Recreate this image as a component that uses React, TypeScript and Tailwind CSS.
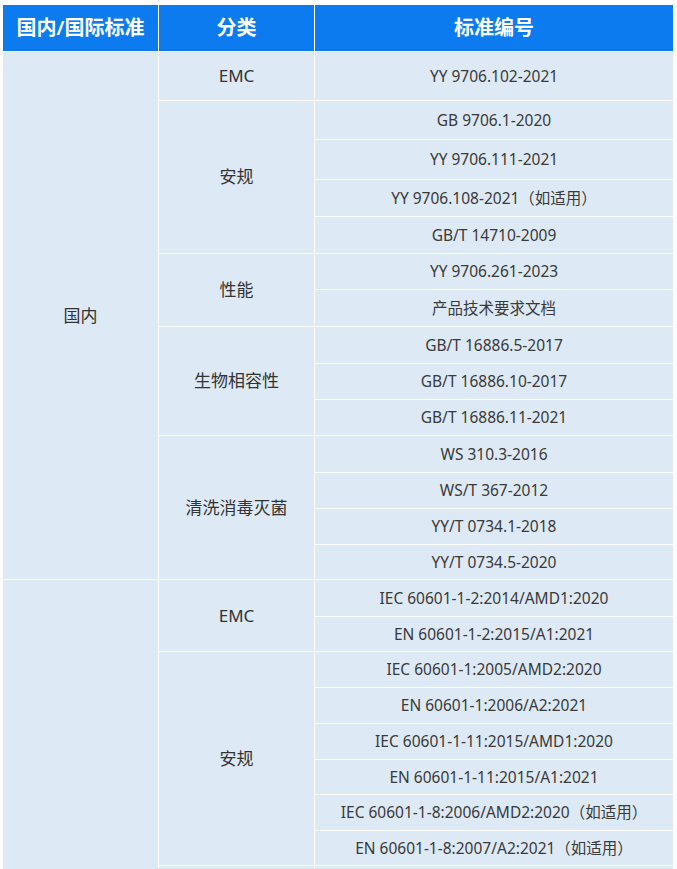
type Sub = { name: string; items: { text: string; h: string }[] };
type Group = { name: string; subs: Sub[] };

// row heights are the track height; the 1px white gap draws the grid line
const groups: Group[] = [
  {
    name: "国内",
    subs: [
      { name: "EMC", items: [{ text: "YY 9706.102-2021", h: "h-[48px]" }] },
      {
        name: "安规",
        items: [
          { text: "GB 9706.1-2020", h: "h-[38px]" },
          { text: "YY 9706.111-2021", h: "h-[39px]" },
          { text: "YY 9706.108-2021（如适用）", h: "h-[36px]" },
          { text: "GB/T 14710-2009", h: "h-[36px]" },
        ],
      },
      {
        name: "性能",
        items: [
          { text: "YY 9706.261-2023", h: "h-[35px]" },
          { text: "产品技术要求文档", h: "h-[36px]" },
        ],
      },
      {
        name: "生物相容性",
        items: [
          { text: "GB/T 16886.5-2017", h: "h-[36px]" },
          { text: "GB/T 16886.10-2017", h: "h-[35px]" },
          { text: "GB/T 16886.11-2021", h: "h-[35px]" },
        ],
      },
      {
        name: "清洗消毒灭菌",
        items: [
          { text: "WS 310.3-2016", h: "h-[36px]" },
          { text: "WS/T 367-2012", h: "h-[35px]" },
          { text: "YY/T 0734.1-2018", h: "h-[35px]" },
          { text: "YY/T 0734.5-2020", h: "h-[34px]" },
        ],
      },
    ],
  },
  {
    name: "国际",
    subs: [
      {
        name: "EMC",
        items: [
          { text: "IEC 60601-1-2:2014/AMD1:2020", h: "h-[36px]" },
          { text: "EN 60601-1-2:2015/A1:2021", h: "h-[34px]" },
        ],
      },
      {
        name: "安规",
        items: [
          { text: "IEC 60601-1:2005/AMD2:2020", h: "h-[35px]" },
          { text: "EN 60601-1:2006/A2:2021", h: "h-[35px]" },
          { text: "IEC 60601-1-11:2015/AMD1:2020", h: "h-[35px]" },
          { text: "EN 60601-1-11:2015/A1:2021", h: "h-[34px]" },
          { text: "IEC 60601-1-8:2006/AMD2:2020（如适用）", h: "h-[35px]" },
          { text: "EN 60601-1-8:2007/A2:2021（如适用）", h: "h-[34px]" },
        ],
      },
      {
        name: "性能",
        items: [
          { text: "ISO 80601-2-61:2017", h: "h-[35px]" },
          { text: "IEC 60601-2-49:2011", h: "h-[35px]" },
        ],
      },
      {
        name: "生物相容性",
        items: [
          { text: "ISO 10993-1:2018", h: "h-[35px]" },
          { text: "ISO 10993-5:2009", h: "h-[35px]" },
          { text: "ISO 10993-10:2021", h: "h-[35px]" },
          { text: "ISO 10993-23:2021", h: "h-[35px]" },
        ],
      },
      {
        name: "清洗消毒灭菌",
        items: [
          { text: "ISO 17664-1:2021", h: "h-[35px]" },
          { text: "ISO 15883-1:2006/AMD1:2014", h: "h-[35px]" },
        ],
      },
      { name: "可用性", items: [{ text: "IEC 62366-1:2015/AMD1:2020", h: "h-[35px]" }] },
      { name: "软件", items: [{ text: "IEC 62304:2006/AMD1:2015", h: "h-[35px]" }] },
    ],
  },
];

const font = "font-['Noto_Sans','Noto_Sans_CJK_SC',sans-serif]";

export default function App() {
  return (
    <div className={`h-[869px] overflow-hidden bg-white pl-[3px] pr-[4px] pt-[5px] ${font}`}>
      <div className="flex flex-col gap-px bg-white">
        {/* header */}
        <div className="flex gap-px">
          <div className="flex h-[46px] w-[155px] items-center justify-center bg-[#0b7bef] text-[20px] font-semibold text-white">
            国内/国际标准
          </div>
          <div className="flex h-[46px] w-[155px] items-center justify-center bg-[#0b7bef] text-[20px] font-semibold text-white">
            分类
          </div>
          <div className="flex h-[46px] flex-1 items-center justify-center bg-[#0b7bef] text-[20px] font-semibold text-white">
            标准编号
          </div>
        </div>

        {groups.map((g) => (
          <div key={g.name} className="flex gap-px">
            <div className="flex w-[155px] items-center justify-center bg-[#dde9f5] text-[17px] text-[#333]">
              {g.name}
            </div>
            <div className="flex flex-1 flex-col gap-px">
              {g.subs.map((s, i) => (
                <div key={i} className="flex gap-px">
                  <div className="flex w-[155px] items-center justify-center bg-[#dde9f5] text-[17px] text-[#333]">
                    {s.name}
                  </div>
                  <div className="flex flex-1 flex-col gap-px">
                    {s.items.map((it) => (
                      <div
                        key={it.text}
                        className={`flex ${it.h} items-center justify-center bg-[#dde9f5] pt-px text-[15.5px] text-[#3a3a3a]`}
                      >
                        {it.text}
                      </div>
                    ))}
                  </div>
                </div>
              ))}
            </div>
          </div>
        ))}
      </div>
    </div>
  );
}
